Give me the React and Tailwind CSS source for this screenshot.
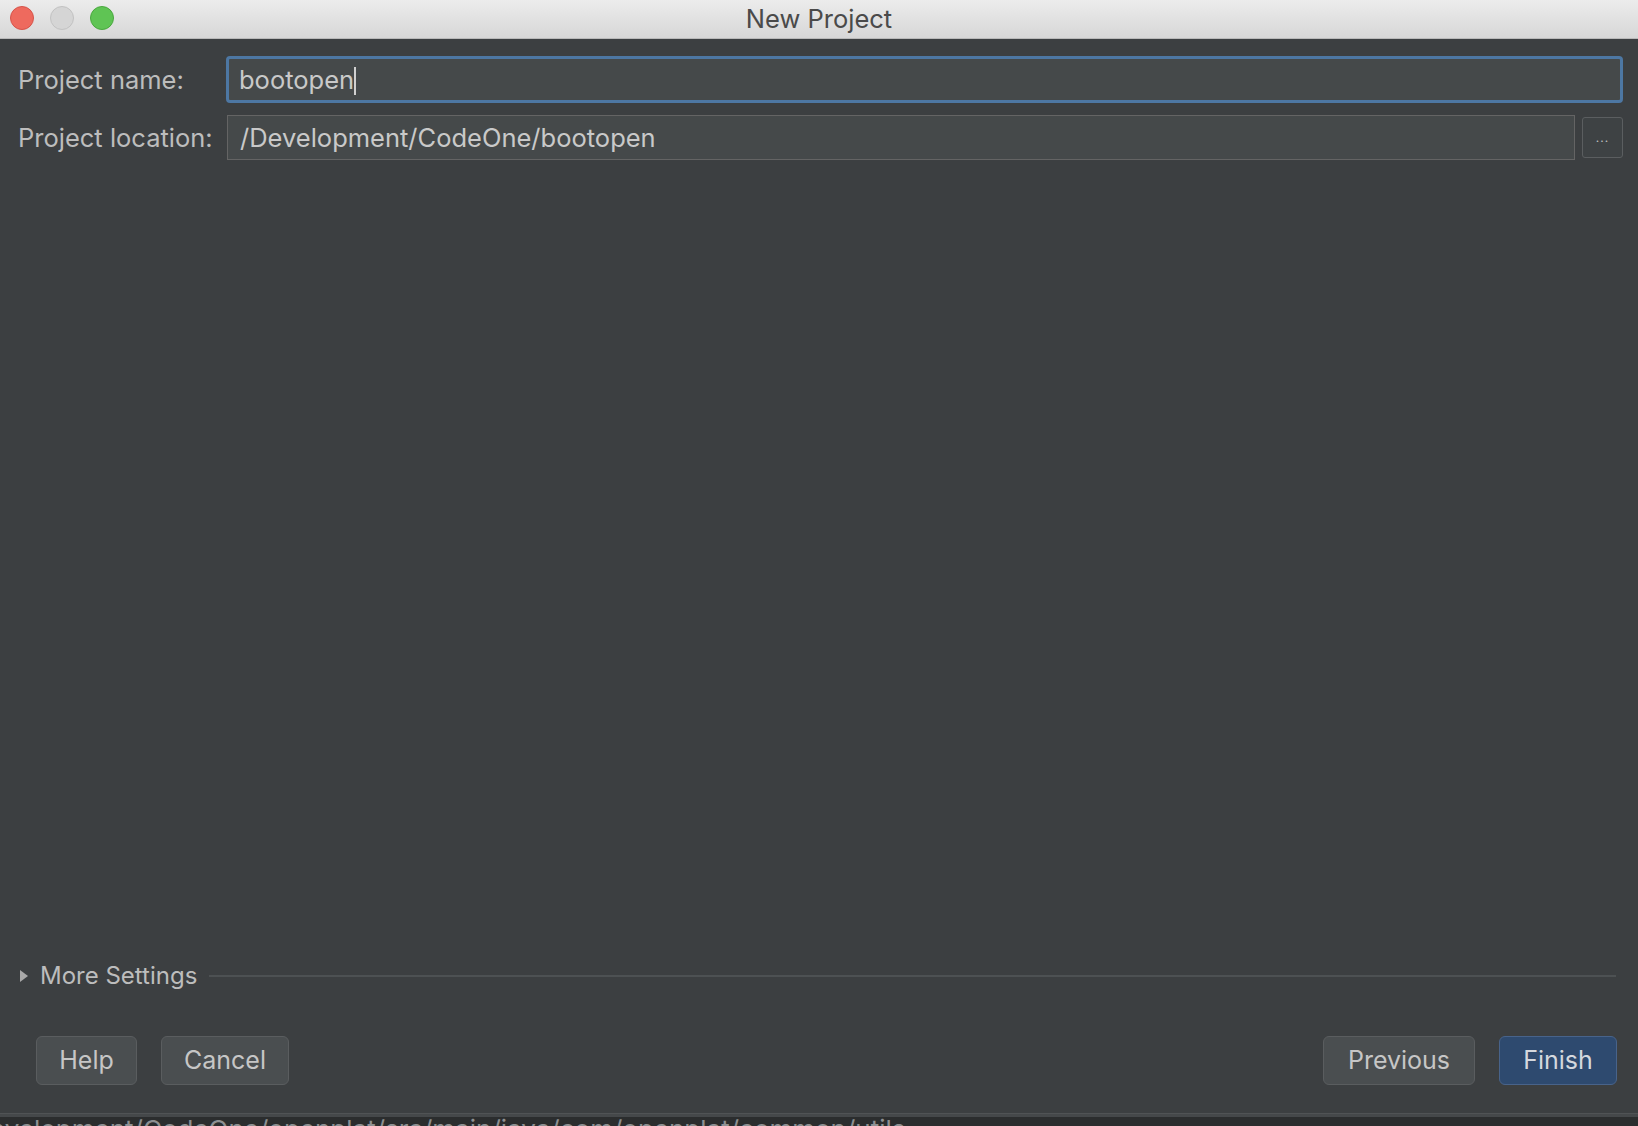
import React from 'react';

const font = { fontFamily: 'Inter, "Liberation Sans", sans-serif' };

const Button = ({ children, primary, className }) => (
    <div
        className={
            'flex items-center justify-center h-[49px] rounded-[6px] border text-[25px] ' +
            (primary
                ? 'bg-[#2e4a6f] border-[#48638a] text-[#d4d8de] '
                : 'bg-[#4a4e50] border-[#5a5d5f] text-[#c6c6c6] ') +
            className
        }
    >
        {children}
    </div>
);

const App = () => {
    return (
        <div className="flex flex-col w-[1638px] h-[1126px] overflow-hidden bg-[#3c3f41]" style={font}>
            {/* title bar */}
            <div className="relative flex items-center justify-center h-[39px] shrink-0 bg-gradient-to-b from-[#ececec] to-[#d7d7d7] border-b border-[#b9b9b9]">
                <div className="absolute left-[10px] top-[6px] flex gap-[16px]">
                    <div className="w-[24px] h-[24px] rounded-full bg-[#ee6a5e] border border-[#d6544a]"></div>
                    <div className="w-[24px] h-[24px] rounded-full bg-[#d5d5d5] border border-[#c2c2c2]"></div>
                    <div className="w-[24px] h-[24px] rounded-full bg-[#5fc454] border border-[#4aa83f]"></div>
                </div>
                <span className="text-[25.5px] text-[#4a4a4a]">New Project</span>
            </div>

            {/* dialog body */}
            <div className="flex flex-col flex-1 pt-[17px] pb-[28px] pl-[18px] pr-[15px]">
                <div className="flex items-center h-[47px]">
                    <div className="w-[208px] pt-[2px] text-[25.5px] text-[#bdbdbd]">Project name:</div>
                    <div className="flex items-center flex-1 h-[47px] rounded-[4px] border-[3px] border-[#4d77a3] bg-[#45494a] pl-[10px] pt-[2px]">
                        <span className="text-[25.5px] text-[#c9c9c9]">bootopen</span>
                        <span className="w-[2px] h-[28px] bg-[#d0d0d0]"></span>
                    </div>
                </div>
                <div className="flex items-center h-[45px] mt-[12px]">
                    <div className="w-[209px] pt-[2px] text-[25.5px] text-[#bdbdbd] whitespace-nowrap">Project location:</div>
                    <div className="flex items-center flex-1 h-[45px] border border-[#646464] bg-[#45494a] pl-[12px] pt-[2px]">
                        <span className="text-[25.5px] text-[#c9c9c9]">/Development/CodeOne/bootopen</span>
                    </div>
                    <div className="flex items-center justify-center w-[41px] h-[41px] ml-[7px] rounded-[3px] border border-[#5b5e60] bg-[#3e4244]">
                        <span className="text-[12px] leading-none text-[#c0c0c0] tracking-[1px]">...</span>
                    </div>
                </div>

                <div className="flex-1"></div>

                <div className="flex items-center h-[30px]">
                    <svg width="10" height="14" viewBox="0 0 10 14" className="ml-[1px]">
                        <path d="M1 1 L9 7 L1 13 Z" fill="#a9a9a9" />
                    </svg>
                    <span className="ml-[11px] text-[24px] text-[#bdbdbd]">More Settings</span>
                    <div className="flex-1 h-[2px] ml-[12px] mr-[7px] bg-[#4d5153]"></div>
                </div>

                <div className="flex items-center mt-[45px] pl-[18px] pr-[6px]">
                    <Button className="w-[101px]">Help</Button>
                    <Button className="w-[128px] ml-[24px]">Cancel</Button>
                    <div className="flex-1"></div>
                    <Button className="w-[152px]">Previous</Button>
                    <Button primary className="w-[118px] ml-[24px]">Finish</Button>
                </div>
            </div>

            {/* window behind */}
            <div className="h-[4px] shrink-0 bg-[#45484a] border-t border-[#505355]"></div>
            <div className="h-[9px] shrink-0 bg-[#2b2d2e] overflow-hidden">
                <div className="text-[26px] leading-[26px] text-[#8e9092] whitespace-nowrap -ml-[10px]">
                    evelopment/CodeOne/openplat/src/main/java/com/openplat/common/utils
                </div>
            </div>
        </div>
    );
};

export default App;
